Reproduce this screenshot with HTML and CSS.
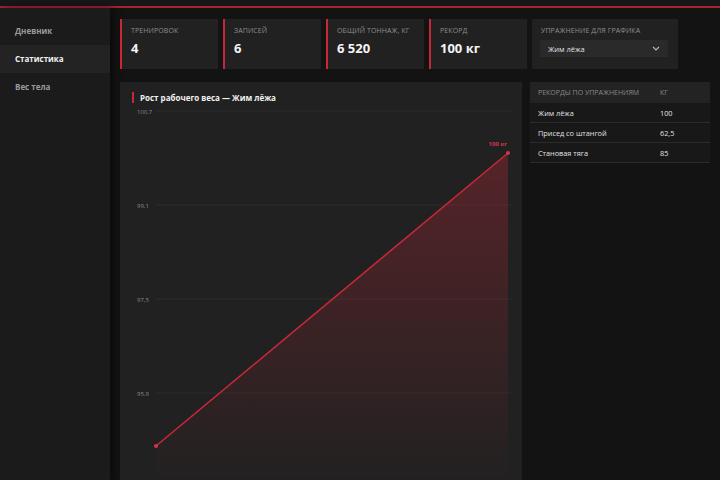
FILE: index.html
```html
<!DOCTYPE html>
<html lang="ru">
<head>
    <meta charset="UTF-8">
    <meta name="viewport" content="width=device-width, initial-scale=1.0">
    <title>Статистика</title>
    <link rel="stylesheet" href="styles.css">
</head>
<body>
    <div class="top-bar"></div>

    <div class="layout">
        <nav class="sidebar">
            <a href="#" class="nav-item">Дневник</a>
            <a href="#" class="nav-item active">Статистика</a>
            <a href="#" class="nav-item">Вес тела</a>
        </nav>

        <main class="content">
            <div class="stats-row">
                <div class="stat-card">
                    <div class="stat-label">Тренировок</div>
                    <div class="stat-value">4</div>
                </div>
                <div class="stat-card">
                    <div class="stat-label">Записей</div>
                    <div class="stat-value">6</div>
                </div>
                <div class="stat-card">
                    <div class="stat-label">Общий тоннаж, кг</div>
                    <div class="stat-value">6 520</div>
                </div>
                <div class="stat-card">
                    <div class="stat-label">Рекорд</div>
                    <div class="stat-value">100 кг</div>
                </div>
                <div class="stat-card select-card">
                    <div class="stat-label">Упражнение для графика</div>
                    <div class="select-box">
                        <span>Жим лёжа</span>
                        <svg width="8" height="5" viewBox="0 0 8 5"><path d="M1 1l3 3 3-3" fill="none" stroke="#bbb" stroke-width="1.1"/></svg>
                    </div>
                </div>
            </div>

            <div class="bottom-row">
                <div class="chart-card">
                    <div class="chart-title">Рост рабочего веса — Жим лёжа</div>
                    <svg class="chart" width="402" height="380" viewBox="0 0 402 380">
                        <defs>
                            <linearGradient id="fill" x1="0" y1="0" x2="0" y2="1">
                                <stop offset="0" stop-color="#c62838" stop-opacity="0.32"/>
                                <stop offset="1" stop-color="#c62838" stop-opacity="0"/>
                            </linearGradient>
                        </defs>
                        <g class="grid">
                            <line x1="36" y1="5" x2="392" y2="5"/>
                            <line x1="36" y1="99" x2="392" y2="99"/>
                            <line x1="36" y1="193" x2="392" y2="193"/>
                            <line x1="36" y1="287" x2="392" y2="287"/>
                        </g>
                        <g class="axis">
                            <text x="17" y="8">100,7</text>
                            <text x="17" y="102">99,1</text>
                            <text x="17" y="196">97,5</text>
                            <text x="17" y="290">95,9</text>
                        </g>
                        <path d="M36 340 L388 47 L388 380 L36 380 Z" fill="url(#fill)"/>
                        <path d="M36 340 L388 47" stroke="#c62838" stroke-width="1.6" fill="none"/>
                        <circle cx="36" cy="340" r="2" fill="#d0384a"/>
                        <circle cx="388" cy="47" r="2" fill="#d0384a"/>
                        <text class="point-label" x="387" y="40" text-anchor="end">100 кг</text>
                    </svg>
                </div>

                <div class="records">
                    <table>
                        <thead>
                            <tr><th>Рекорды по упражнениям</th><th>Кг</th></tr>
                        </thead>
                        <tbody>
                            <tr><td>Жим лёжа</td><td>100</td></tr>
                            <tr><td>Присед со штангой</td><td>62,5</td></tr>
                            <tr><td>Становая тяга</td><td>85</td></tr>
                        </tbody>
                    </table>
                </div>
            </div>
        </main>
    </div>
</body>
</html>
```

FILE: styles.css
```css
body {
    margin: 0;
    background-color: #131313;
    color: #e6e6e6;
    font-family: "Open Sans", "Noto Sans", sans-serif;
    height: 480px;
    overflow: hidden;
}

.top-bar {
    height: 6px;
    background-color: #171717;
    border-bottom: 2px solid #a82232;
}

.layout {
    display: flex;
    height: 472px;
}

.sidebar {
    width: 110px;
    flex-shrink: 0;
    background-color: #1b1b1b;
    box-shadow: 3px 0 8px rgba(0, 0, 0, 0.5);
    padding-top: 9px;
    display: flex;
    flex-direction: column;
}

.nav-item {
    height: 28px;
    line-height: 28px;
    padding-left: 15px;
    font-size: 8px;
    font-weight: 700;
    color: #9a9a9a;
    text-decoration: none;
}

.nav-item.active {
    background-color: #232323;
    color: #f2f2f2;
}

.content {
    flex: 1;
    padding: 11px 10px 0 10px;
}

.stats-row {
    display: flex;
    gap: 5px;
    height: 50px;
}

.stat-card {
    width: 98px;
    background-color: #212121;
    border-left: 2px solid #c62838;
    padding: 7px 0 0 9px;
    box-sizing: border-box;
}

.select-card {
    width: 146px;
    border-left: none;
    padding-left: 9px;
}

.stat-label {
    font-size: 7px;
    text-transform: uppercase;
    color: #8e8e8e;
    letter-spacing: 0.1px;
}

.stat-value {
    font-size: 13px;
    font-weight: 700;
    color: #f4f4f4;
    margin-top: 4px;
}

.select-box {
    margin-top: 5px;
    margin-left: -1px;
    width: 128px;
    height: 17px;
    background-color: #2a2a2a;
    display: flex;
    align-items: center;
    justify-content: space-between;
    padding: 0 8px;
    box-sizing: border-box;
    font-size: 7.5px;
    color: #e0e0e0;
}

.bottom-row {
    display: flex;
    gap: 8px;
    margin-top: 13px;
}

.chart-card {
    width: 402px;
    background-color: #212121;
    flex-shrink: 0;
}

.chart-title {
    margin: 10px 0 0 12px;
    padding-left: 6px;
    border-left: 2px solid #c62838;
    font-size: 8px;
    font-weight: 700;
    color: #f2f2f2;
    line-height: 11px;
}

.chart {
    display: block;
    margin-top: 3px;
}

.grid line {
    stroke: #2c2c2c;
    stroke-width: 1;
}

.axis text {
    font-size: 6px;
    fill: #8a8a8a;
}

.point-label {
    font-size: 6px;
    font-weight: 700;
    fill: #d0384a;
}

.records {
    width: 180px;
}

.records table {
    width: 100%;
    border-collapse: collapse;
    font-size: 7.3px;
}

.records th {
    background-color: #232323;
    height: 21px;
    padding: 0 0 0 8px;
    text-align: left;
    font-weight: 400;
    font-size: 7px;
    text-transform: uppercase;
    color: #8a8a8a;
}

.records td {
    height: 19px;
    padding: 0 0 0 8px;
    color: #e2e2e2;
    border-bottom: 1px solid #2b2b2b;
    background-color: #181818;
}

.records th:last-child,
.records td:last-child {
    width: 50px;
    padding-left: 0;
}
```
